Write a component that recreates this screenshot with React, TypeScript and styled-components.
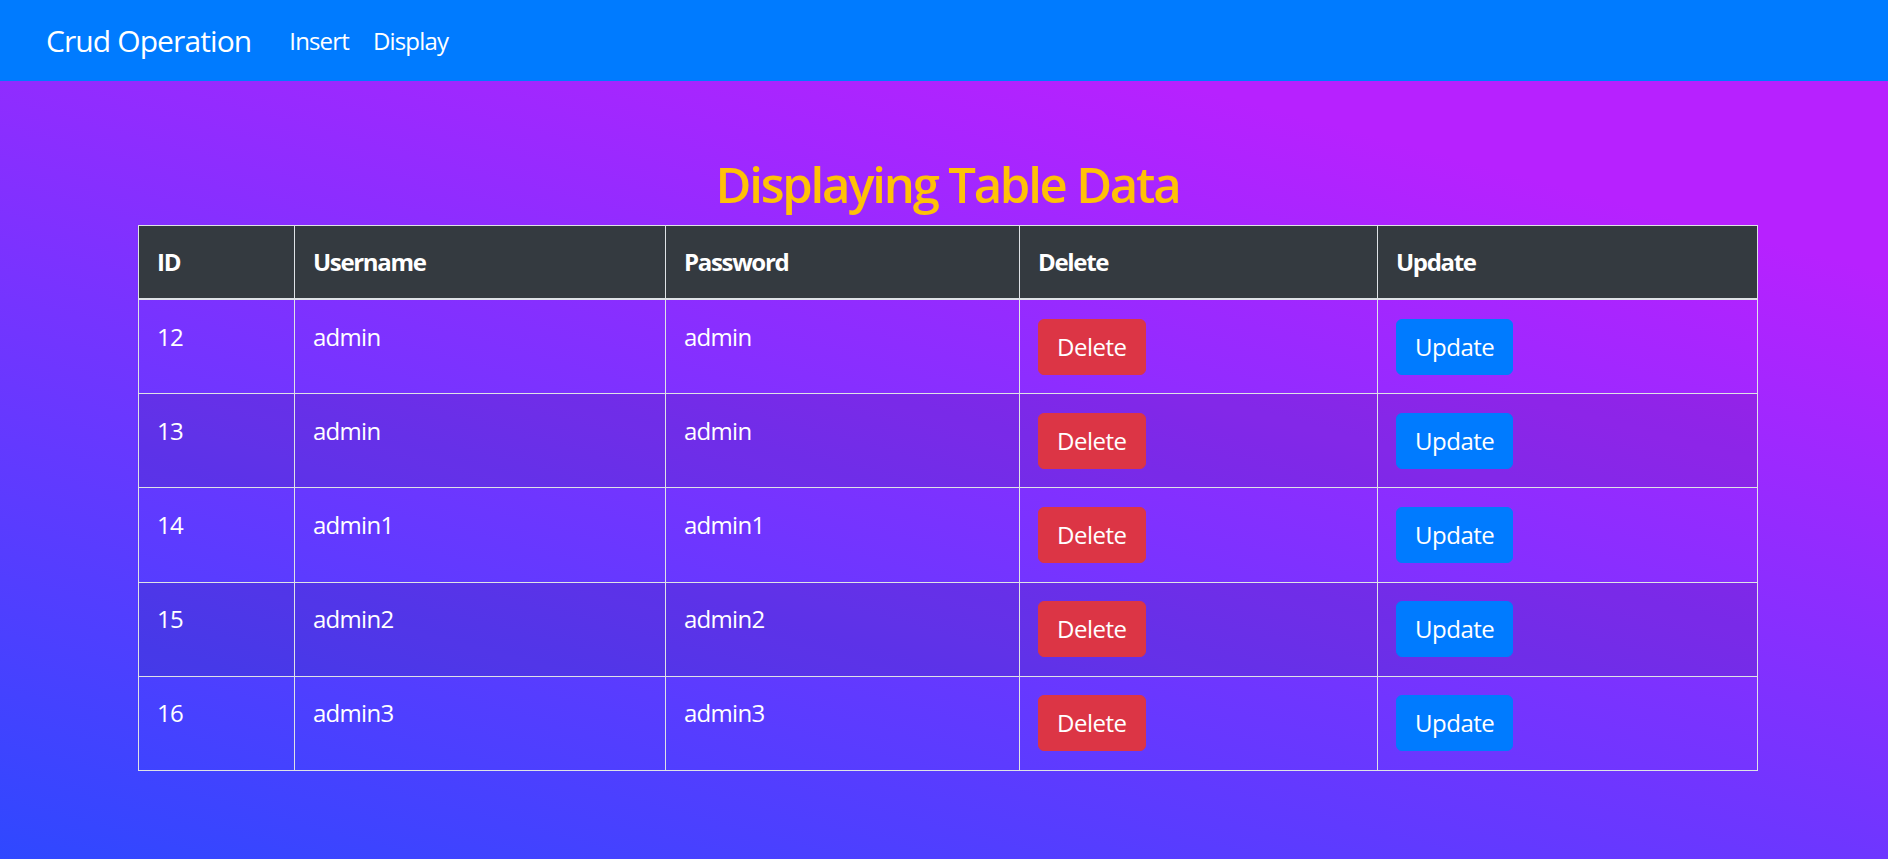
import React from "react";
import styled, { createGlobalStyle } from "styled-components";

const GlobalStyle = createGlobalStyle`
  html, body {
    margin: 0;
    padding: 0;
  }
  *, *::before, *::after {
    box-sizing: border-box;
  }
  body {
    font-family: "Open Sans", "Noto Sans", "Liberation Sans", sans-serif;
    font-size: 24px;
    line-height: 1.5;
    color: #ffffff;
    letter-spacing: -0.03em;
  }
`;

const Page = styled.div`
  min-height: 100vh;
  background: linear-gradient(15deg, #2f48ff 0%, #b721ff 80%);
`;

const NavBar = styled.nav`
  display: flex;
  align-items: center;
  height: 81px;
  padding: 0 46px;
  background: #007bff;
`;

const Brand = styled.a`
  font-size: 30px;
  line-height: 45px;
  letter-spacing: -0.03em;
  color: #ffffff;
  text-decoration: none;
  margin-right: 26px;
`;

const NavLinks = styled.div`
  display: flex;
  align-items: center;
`;

const NavLink = styled.a`
  padding: 0 12px;
  font-size: 24px;
  line-height: 36px;
  letter-spacing: -0.035em;
  color: #ffffff;
  text-decoration: none;
`;

const Main = styled.main`
  padding: 73px 131px 60px 138px;
`;

const Title = styled.h1`
  margin: 0 0 11px;
  text-align: center;
  font-size: 49px;
  line-height: 60px;
  font-weight: 600;
  letter-spacing: -0.045em;
  color: #ffc107;
`;

const Table = styled.table`
  width: 100%;
  border-collapse: collapse;
  table-layout: fixed;
`;

const HeadRow = styled.tr`
  background: #343a40;
`;

const Th = styled.th`
  border: 1px solid #dee2e6;
  border-bottom-width: 2px;
  padding: 18px;
  text-align: left;
  vertical-align: top;
  font-weight: 700;
  line-height: 36px;
  letter-spacing: -0.055em;
`;

const Row = styled.tr<{ $striped: boolean }>`
  background: ${(p) => (p.$striped ? "rgba(0, 0, 0, 0.09)" : "transparent")};
`;

const Td = styled.td`
  border: 1px solid #dee2e6;
  padding: 18.6px 18px;
  vertical-align: top;
  line-height: 36px;
`;

const Button = styled.button<{ $variant: "danger" | "primary" }>`
  display: inline-block;
  padding: 9px 18px;
  font-family: inherit;
  font-size: 24px;
  line-height: 36px;
  letter-spacing: -0.02em;
  color: #ffffff;
  border-radius: 6px;
  border: 1.5px solid ${(p) => (p.$variant === "danger" ? "#dc3545" : "#007bff")};
  background: ${(p) => (p.$variant === "danger" ? "#dc3545" : "#007bff")};
  cursor: pointer;
`;

const columns = [
  { label: "ID", width: 156 },
  { label: "Username", width: 371 },
  { label: "Password", width: 354 },
  { label: "Delete", width: 358 },
  { label: "Update", width: 380 },
];

const users = [
  { id: 12, username: "admin", password: "admin" },
  { id: 13, username: "admin", password: "admin" },
  { id: 14, username: "admin1", password: "admin1" },
  { id: 15, username: "admin2", password: "admin2" },
  { id: 16, username: "admin3", password: "admin3" },
];

export default function App() {
  return (
    <>
      <GlobalStyle />
      <Page>
        <NavBar>
          <Brand href="#">Crud Operation</Brand>
          <NavLinks>
            <NavLink href="#">Insert</NavLink>
            <NavLink href="#">Display</NavLink>
          </NavLinks>
        </NavBar>
        <Main>
          <Title>Displaying Table Data</Title>
          <Table>
            <colgroup>
              {columns.map((c) => (
                <col key={c.label} style={{ width: c.width }} />
              ))}
            </colgroup>
            <thead>
              <HeadRow>
                {columns.map((c) => (
                  <Th key={c.label}>{c.label}</Th>
                ))}
              </HeadRow>
            </thead>
            <tbody>
              {users.map((u, i) => (
                <Row key={u.id} $striped={i % 2 === 1}>
                  <Td>{u.id}</Td>
                  <Td>{u.username}</Td>
                  <Td>{u.password}</Td>
                  <Td>
                    <Button $variant="danger">Delete</Button>
                  </Td>
                  <Td>
                    <Button $variant="primary">Update</Button>
                  </Td>
                </Row>
              ))}
            </tbody>
          </Table>
        </Main>
      </Page>
    </>
  );
}
